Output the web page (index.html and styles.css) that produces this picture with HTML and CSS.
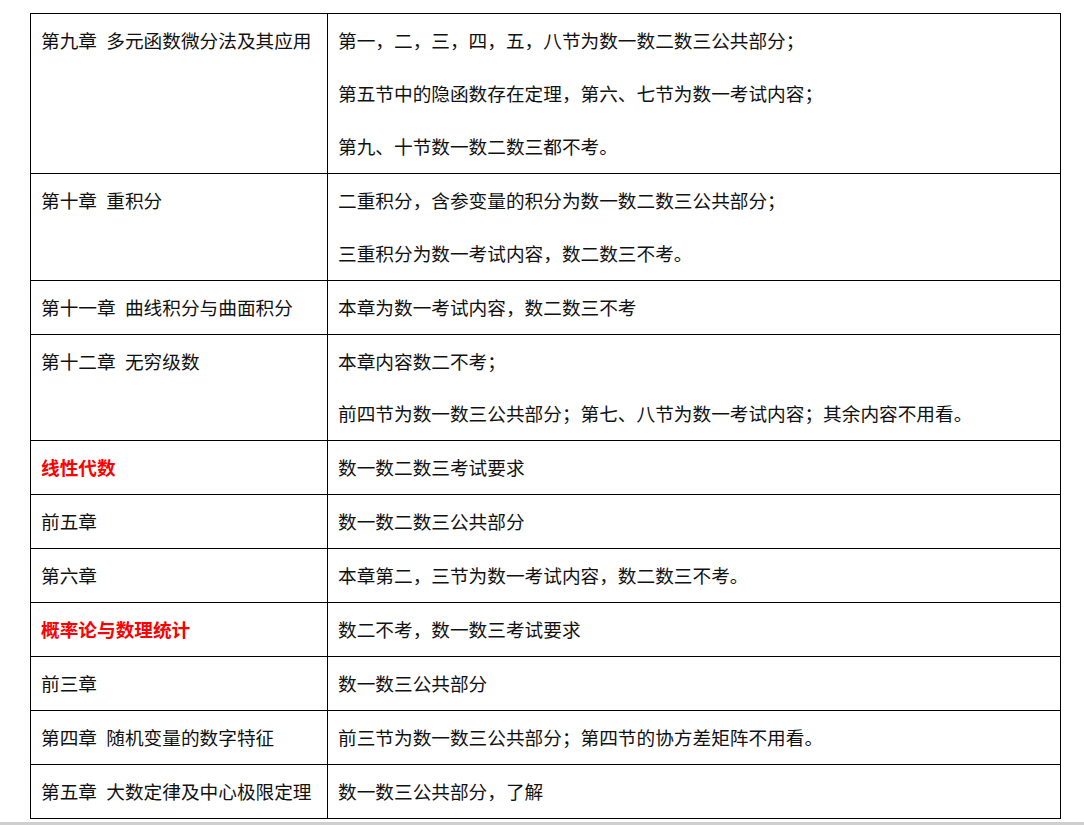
FILE: index.html
```html
<!DOCTYPE html>
<html lang="zh-CN">
<head>
<meta charset="utf-8">
<title>考试范围</title>
<link rel="stylesheet" href="styles.css">
</head>
<body>
<div class="page">
  <table class="scope">
    <tr>
      <td class="chap"><p>第九章&ensp;多元函数微分法及其应用</p></td>
      <td class="desc">
        <p>第一，二，三，四，五，八节为数一数二数三公共部分；</p>
        <p>第五节中的隐函数存在定理，第六、七节为数一考试内容；</p>
        <p>第九、十节数一数二数三都不考。</p>
      </td>
    </tr>
    <tr>
      <td class="chap"><p>第十章&ensp;重积分</p></td>
      <td class="desc">
        <p>二重积分，含参变量的积分为数一数二数三公共部分；</p>
        <p>三重积分为数一考试内容，数二数三不考。</p>
      </td>
    </tr>
    <tr>
      <td class="chap"><p>第十一章&ensp;曲线积分与曲面积分</p></td>
      <td class="desc"><p>本章为数一考试内容，数二数三不考</p></td>
    </tr>
    <tr>
      <td class="chap"><p>第十二章&ensp;无穷级数</p></td>
      <td class="desc">
        <p>本章内容数二不考；</p>
        <p>前四节为数一数三公共部分；第七、八节为数一考试内容；其余内容不用看。</p>
      </td>
    </tr>
    <tr>
      <td class="chap"><p class="section">线性代数</p></td>
      <td class="desc"><p>数一数二数三考试要求</p></td>
    </tr>
    <tr>
      <td class="chap"><p>前五章</p></td>
      <td class="desc"><p>数一数二数三公共部分</p></td>
    </tr>
    <tr>
      <td class="chap"><p>第六章</p></td>
      <td class="desc"><p>本章第二，三节为数一考试内容，数二数三不考。</p></td>
    </tr>
    <tr>
      <td class="chap"><p class="section">概率论与数理统计</p></td>
      <td class="desc"><p>数二不考，数一数三考试要求</p></td>
    </tr>
    <tr>
      <td class="chap"><p>前三章</p></td>
      <td class="desc"><p>数一数三公共部分</p></td>
    </tr>
    <tr>
      <td class="chap"><p>第四章&ensp;随机变量的数字特征</p></td>
      <td class="desc"><p>前三节为数一数三公共部分；第四节的协方差矩阵不用看。</p></td>
    </tr>
    <tr>
      <td class="chap"><p>第五章&ensp;大数定律及中心极限定理</p></td>
      <td class="desc"><p>数一数三公共部分，了解</p></td>
    </tr>
  </table>
  <div class="bottom-bar"></div>
</div>
</body>
</html>
```

FILE: styles.css
```css
html, body {
  margin: 0;
  padding: 0;
  background: #ffffff;
}

body {
  font-family: "Noto Sans CJK SC", "Noto Sans", sans-serif;
  font-size: 18.67px;
  color: #111;
  overflow: hidden;
}

.page {
  padding-top: 13px;
}

.scope {
  margin-left: 30px;
  width: 1031px;
  border-collapse: collapse;
  table-layout: fixed;
}

.scope td {
  border: 1px solid #000;
  padding: 0 10px;
  vertical-align: top;
}

.scope td.chap {
  width: 276px;
}

.scope p {
  margin: 0;
  height: 52.93px;
  line-height: 52.93px;
  white-space: nowrap;
}

.scope p.section {
  color: #ff0000;
  font-weight: 700;
}

.bottom-bar {
  margin-top: 3px;
  height: 4px;
  background: #cfcfcf;
}
```
